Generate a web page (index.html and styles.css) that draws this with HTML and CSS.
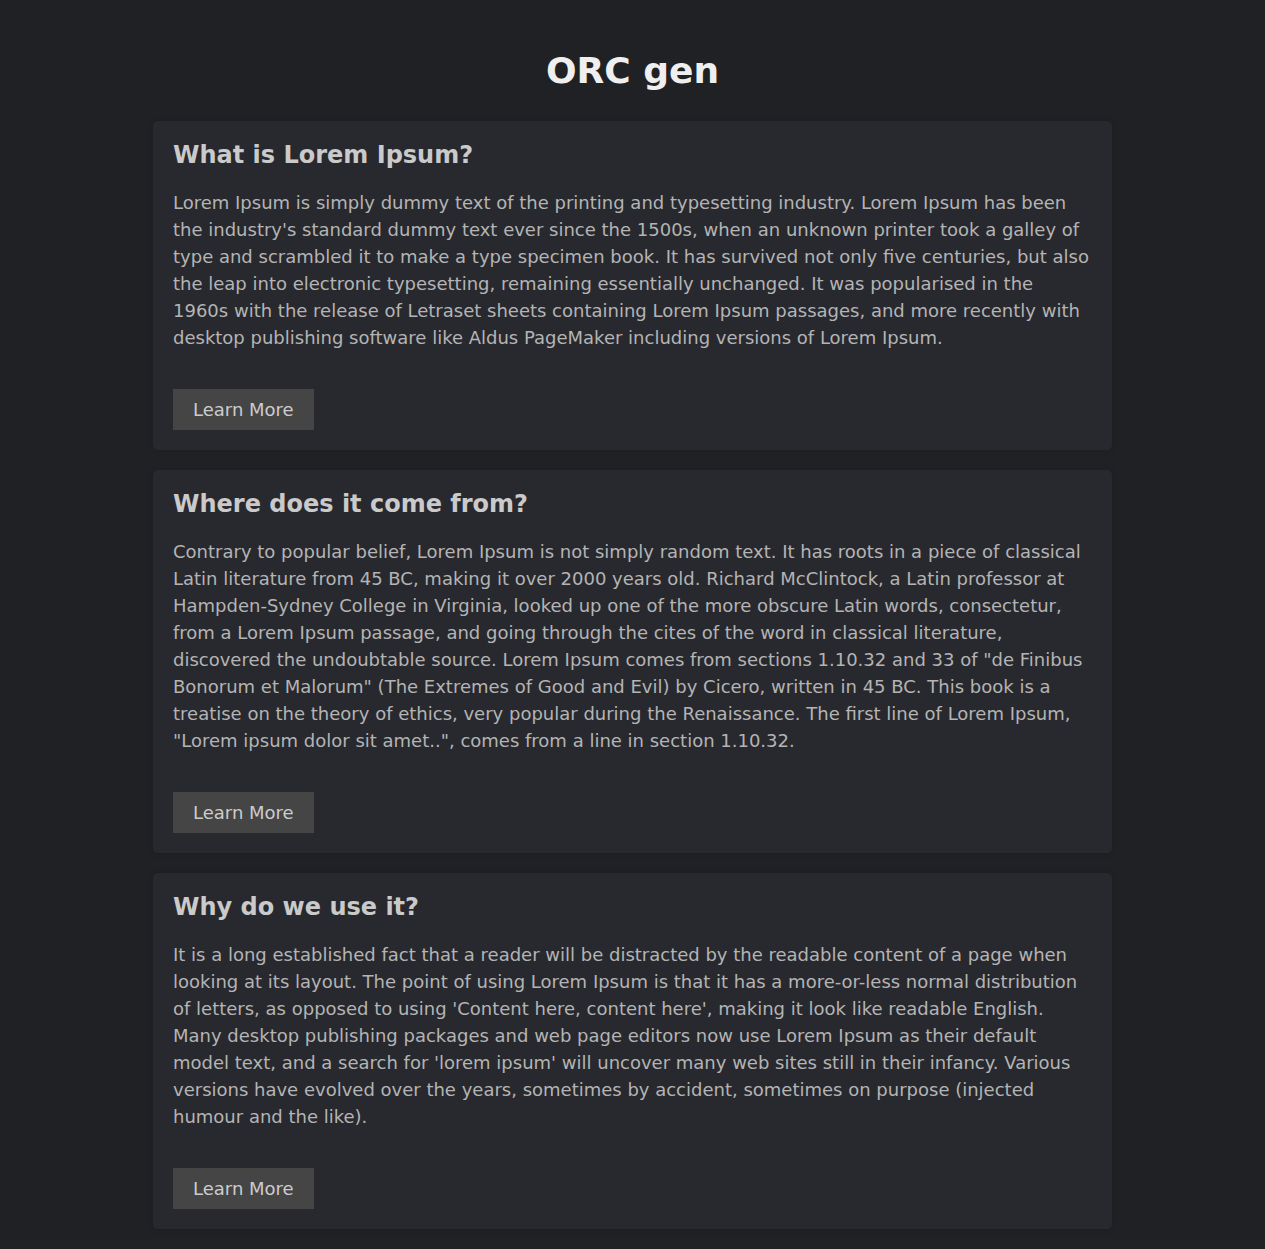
FILE: index.html
```html
<!DOCTYPE html>
<html lang="en">
<head>
<meta charset="utf-8">
<title>ORC gen</title>
<link rel="stylesheet" href="styles.css">
</head>
<body>
<header class="page-header">
  <h1 class="page-title">ORC gen</h1>
</header>
<main class="cards">
  <section class="card">
    <h2 class="card-title">What is Lorem Ipsum?</h2>
    <p class="card-text">Lorem Ipsum is simply dummy text of the printing and typesetting industry. Lorem Ipsum has been the industry's standard dummy text ever since the 1500s, when an unknown printer took a galley of type and scrambled it to make a type specimen book. It has survived not only five centuries, but also the leap into electronic typesetting, remaining essentially unchanged. It was popularised in the 1960s with the release of Letraset sheets containing Lorem Ipsum passages, and more recently with desktop publishing software like Aldus PageMaker including versions of Lorem Ipsum.</p>
    <div class="card-actions"><button class="btn">Learn More</button></div>
  </section>
  <section class="card">
    <h2 class="card-title">Where does it come from?</h2>
    <p class="card-text">Contrary to popular belief, Lorem Ipsum is not simply random text. It has roots in a piece of classical Latin literature from 45 BC, making it over 2000 years old. Richard McClintock, a Latin professor at Hampden-Sydney College in Virginia, looked up one of the more obscure Latin words, consectetur, from a Lorem Ipsum passage, and going through the cites of the word in classical literature, discovered the undoubtable source. Lorem Ipsum comes from sections 1.10.32 and 33 of "de Finibus Bonorum et Malorum" (The Extremes of Good and Evil) by Cicero, written in 45 BC. This book is a treatise on the theory of ethics, very popular during the Renaissance. The first line of Lorem Ipsum, "Lorem ipsum dolor sit amet..", comes from a line in section 1.10.32.</p>
    <div class="card-actions"><button class="btn">Learn More</button></div>
  </section>
  <section class="card">
    <h2 class="card-title">Why do we use it?</h2>
    <p class="card-text">It is a long established fact that a reader will be distracted by the readable content of a page when looking at its layout. The point of using Lorem Ipsum is that it has a more-or-less normal distribution of letters, as opposed to using 'Content here, content here', making it look like readable English. Many desktop publishing packages and web page editors now use Lorem Ipsum as their default model text, and a search for 'lorem ipsum' will uncover many web sites still in their infancy. Various versions have evolved over the years, sometimes by accident, sometimes on purpose (injected humour and the like).</p>
    <div class="card-actions"><button class="btn">Learn More</button></div>
  </section>
</main>
</body>
</html>
```
FILE: styles.css
```css
html, body {
  margin: 0;
  padding: 0;
}
body {
  background: #202125;
  font-family: "DejaVu Sans", sans-serif;
  font-size: 18px;
  color: #b4b4b4;
}
.page-header {
  padding-top: 50px;
  padding-bottom: 30px;
  text-align: center;
}
.page-title {
  margin: 0;
  font-size: 36px;
  font-weight: bold;
  line-height: normal;
  color: #efefef;
}
.cards {
  width: 959px;
  margin: 0 auto;
  padding-bottom: 20px;
  display: flex;
  flex-direction: column;
  gap: 20px;
}
.card {
  background: #28292e;
  border-radius: 5px;
  padding: 20px;
  box-shadow: 0 0 6px rgba(0, 0, 0, 0.12);
}
.card-title {
  margin: 0 0 20px;
  font-size: 24px;
  font-weight: bold;
  line-height: normal;
  color: #cacaca;
}
.card-text {
  margin: 0;
  font-size: 18px;
  line-height: 27px;
  color: #b4b4b4;
}
.card-actions {
  margin-top: 38px;
}
.btn {
  display: block;
  width: 141px;
  background: #454545;
  color: #cccccc;
  border: none;
  border-radius: 0;
  font-family: "DejaVu Sans", sans-serif;
  font-size: 18px;
  line-height: 21px;
  padding: 10px 0 10px 20px;
  text-align: left;
  cursor: pointer;
}
```
